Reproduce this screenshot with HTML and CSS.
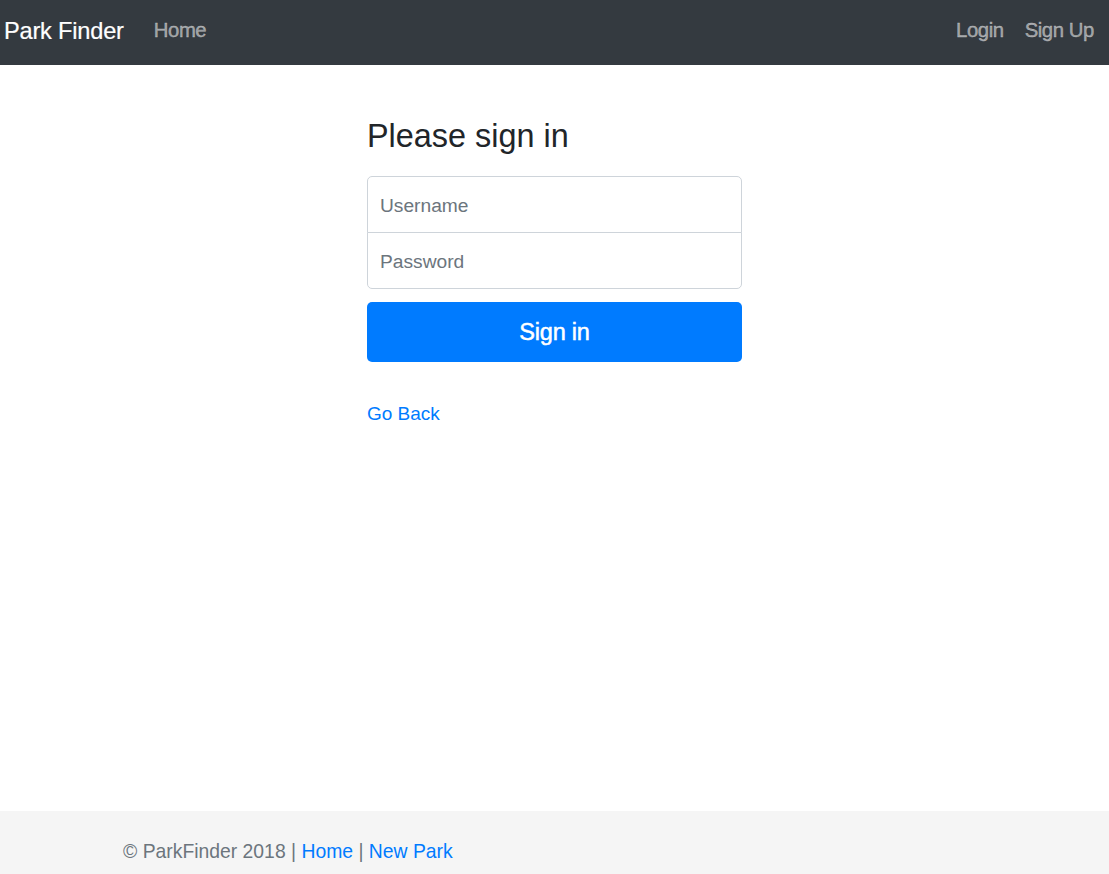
FILE: index.html
```html
<!DOCTYPE html>
<html lang="en">
<head>
<meta charset="utf-8">
<title>Park Finder - Sign in</title>
<link rel="stylesheet" href="styles.css">
</head>
<body>
<nav class="navbar">
  <a class="brand" href="#">Park Finder</a>
  <ul class="nav-left">
    <li><a class="nav-link" href="#">Home</a></li>
  </ul>
  <ul class="nav-right">
    <li><a class="nav-link" href="#">Login</a></li>
    <li><a class="nav-link" href="#">Sign Up</a></li>
  </ul>
</nav>
<main class="main">
  <form class="signin">
    <h1 class="signin-title">Please sign in</h1>
    <div class="field-group">
      <input class="field field-top" type="text" placeholder="Username">
      <input class="field field-bottom" type="password" placeholder="Password">
    </div>
    <button class="btn-primary" type="button">Sign in</button>
    <a class="back-link" href="#">Go Back</a>
  </form>
</main>
<footer class="footer">
  <div class="footer-inner">© ParkFinder 2018 | <a href="#">Home</a> | <a href="#">New Park</a></div>
</footer>
</body>
</html>
```
FILE: styles.css
```css
* { box-sizing: border-box; }
html, body { height: 100%; }
body {
  margin: 0;
  font-family: "Liberation Sans", Arial, sans-serif;
  font-size: 18px;
  line-height: 1.5;
  color: #212529;
  background: #fff;
  display: flex;
  flex-direction: column;
  min-height: 874px;
}
a { text-decoration: none; }

.navbar {
  height: 65px;
  background: #343a40;
  display: flex;
  align-items: center;
  padding: 0 15px 2px 4px;
}
.brand {
  color: #fff;
  font-size: 23.6px;
  line-height: 1;
  margin-right: 30px;
  letter-spacing: -0.2px;
  -webkit-text-stroke: 0.2px #fff;
}
.nav-left, .nav-right {
  list-style: none;
  margin: 0;
  padding: 0;
  display: flex;
  gap: 21px;
}
.nav-right { margin-left: auto; }
.nav-link {
  color: rgba(255,255,255,0.5);
  font-size: 20.3px;
  line-height: 1;
  letter-spacing: -0.4px;
  -webkit-text-stroke: 0.4px rgba(255,255,255,0.5);
}

.main {
  flex: 1;
  display: flex;
  justify-content: center;
  padding-top: 52px;
}
.signin {
  width: 375px;
  display: flex;
  flex-direction: column;
}
.signin-title {
  font-size: 32.4px;
  font-weight: 400;
  line-height: 1.2;
  margin: 0 0 20px;
}
.field-group { display: flex; flex-direction: column; }
.field {
  height: 57px;
  border: 1px solid #ced4da;
  padding: 3px 12px 0;
  font-family: inherit;
  font-size: 19.2px;
  color: #495057;
  background: #fff;
  outline: none;
}
.field::placeholder { color: #6c757d; }
.field-top { border-radius: 5px 5px 0 0; }
.field-bottom { border-radius: 0 0 5px 5px; margin-top: -1px; }
.btn-primary {
  margin-top: 13px;
  height: 60px;
  border: none;
  border-radius: 5px;
  background: #007bff;
  color: #fff;
  font-family: inherit;
  font-size: 23.5px;
  letter-spacing: -0.2px;
  -webkit-text-stroke: 0.5px #fff;
  padding: 1px 0 0;
}
.back-link {
  margin-top: 38px;
  color: #007bff;
  font-size: 19px;
  align-self: flex-start;
}

.footer {
  height: 63px;
  background: #f5f5f5;
  padding: 27px 0 0 123px;
  color: #6c757d;
  font-size: 19.35px;
  line-height: 27px;
}
.footer a { color: #007bff; }
```
